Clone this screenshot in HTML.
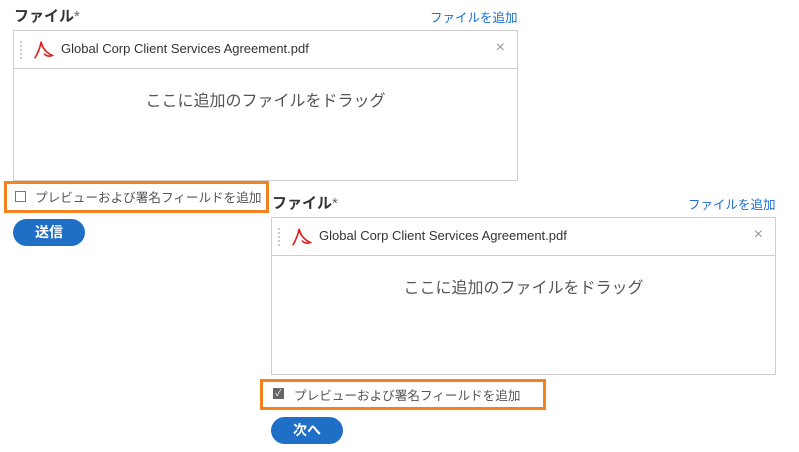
<!DOCTYPE html>
<html><head><meta charset="utf-8"><style>
body{margin:0;width:799px;height:452px;background:#fff;position:relative;overflow:hidden;font-family:"Liberation Sans","Noto Sans CJK JP",sans-serif;}
.a{position:absolute}
.t{font-size:15px;font-weight:bold;color:#333}
.t span{color:#666;font-weight:normal}
.l{font-size:12.5px;color:#1a6fd0}
.box{border:1px solid #cfcfcf;box-sizing:border-box}
.row{border-bottom:1px solid #cfcfcf;height:38px;box-sizing:border-box;position:relative}
.grip{position:absolute;left:6px;top:10px;height:18px;border-left:2px dotted #ccc}
.fn{position:absolute;left:47px;top:10px;font-size:13px;color:#333}
.x{position:absolute;right:12px;top:8px;font-size:16px;color:#999}
.dr{position:absolute;left:0;right:0;top:56px;text-align:center;font-size:16px;color:#555}
.or{border:3px solid #f4821f;box-sizing:border-box}
.cb{font-size:12.6px;color:#555}
.btn{background:#1f6fc6;color:#fff;border-radius:14px;font-size:14px;font-weight:bold;text-align:center;line-height:27px}
</style></head><body>
<svg width="0" height="0" style="position:absolute"><defs><symbol id="pdf" viewBox="0 0 24 24"><path d="M3 21C6 16 9 9 10 3 11 9 14 14 22 18 17 20 14 17 13 16" fill="none" stroke="#e02020" stroke-width="1.8"/></symbol></defs></svg>

<div class="a t" style="left:14px;top:5px">ファイル<span>*</span></div>
<div class="a l" style="left:430px;top:7px">ファイルを追加</div>
<div class="a box" style="left:13px;top:30px;width:505px;height:151px">
<div class="row"><div class="grip"></div><svg class="a" style="left:18px;top:8px" width="22" height="22"><use href="#pdf"/></svg><div class="fn">Global Corp Client Services Agreement.pdf</div><div class="x">×</div></div>
<div class="dr" style="top:56px">ここに追加のファイルをドラッグ</div>
</div>
<div class="a or" style="left:4px;top:181px;width:265px;height:32px"></div>
<div class="a" style="left:15px;top:191px;width:9px;height:9px;border:1.5px solid #777"></div>
<div class="a cb" style="left:35px;top:187px">プレビューおよび署名フィールドを追加</div>
<div class="a btn" style="left:13px;top:219px;width:72px;height:27px">送信</div>

<div class="a t" style="left:272px;top:192px">ファイル<span>*</span></div>
<div class="a l" style="left:688px;top:194px">ファイルを追加</div>
<div class="a box" style="left:271px;top:217px;width:505px;height:158px">
<div class="row"><div class="grip"></div><svg class="a" style="left:18px;top:8px" width="22" height="22"><use href="#pdf"/></svg><div class="fn">Global Corp Client Services Agreement.pdf</div><div class="x">×</div></div>
<div class="dr">ここに追加のファイルをドラッグ</div>
</div>
<div class="a or" style="left:260px;top:379px;width:286px;height:31px"></div>
<div class="a" style="left:273px;top:388px;width:11px;height:11px;background:#666;color:#fff;font-size:9px;line-height:11px;text-align:center">✓</div>
<div class="a cb" style="left:294px;top:385px">プレビューおよび署名フィールドを追加</div>
<div class="a btn" style="left:271px;top:417px;width:72px;height:27px">次へ</div>
</body></html>
